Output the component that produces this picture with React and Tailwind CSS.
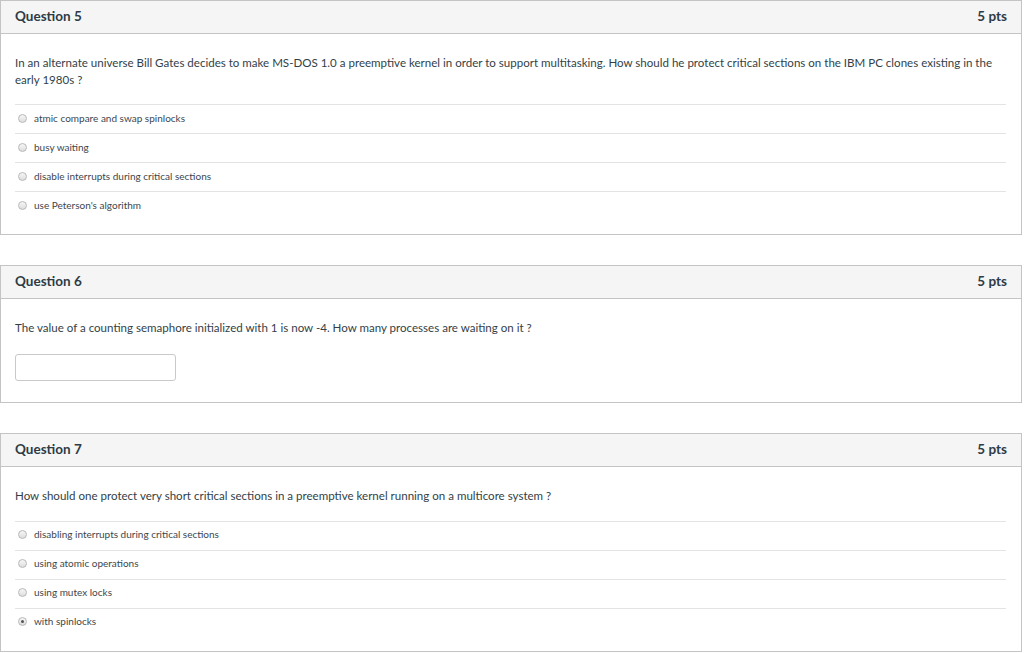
import React from 'react';

const FONT = { fontFamily: 'Lato, "Open Sans", sans-serif' };

const questions = [
  {
    id: 5,
    text: 'In an alternate universe Bill Gates decides to make MS-DOS 1.0 a preemptive kernel in order to support  multitasking. How should he protect critical sections on the IBM PC clones existing in the early 1980s ?',
    answers: [
      'atmic compare and swap spinlocks',
      'busy waiting',
      'disable interrupts during critical sections',
      "use Peterson's algorithm",
    ],
  },
  {
    id: 6,
    text: 'The value of a counting semaphore initialized with 1 is now -4. How many processes are waiting on it ?',
    input: true,
  },
  {
    id: 7,
    text: 'How should one protect very short critical sections in a preemptive kernel running on a multicore system ?',
    answers: [
      'disabling interrupts during critical sections',
      'using atomic operations',
      'using mutex locks',
      'with spinlocks',
    ],
    selected: 3,
    roomy: true,
  },
];

const Radio = ({ checked }) => (
  <span className="w-[9px] h-[9px] rounded-full border border-[#b8b8b8] bg-gradient-to-b from-[#f6f6f6] to-[#dedede] flex items-center justify-center shrink-0">
    {checked && <span className="w-[3px] h-[3px] rounded-full bg-[#555]" />}
  </span>
);

function QuestionCard({ q }) {
  return (
    <div className="w-[1022px] border border-[#c4c4c4] bg-white">
      <div className="h-[33px] bg-[#f5f5f5] border-b border-[#c4c4c4] flex items-center justify-between px-[14px] pb-[2px] text-[#2d3b45] text-[13.5px] font-bold">
        <span>Question {q.id}</span>
        <span>5 pts</span>
      </div>
      <div className={`px-[14px] pt-[20px] ${q.input ? 'pb-[21px]' : 'pb-[14px]'}`}>
        <p className="text-[11.55px] leading-[17px] text-[#333f48]">{q.text}</p>
        {q.input && (
          <div className="mt-[18px] w-[161px] h-[27px] border border-[#c9c9c9] rounded-[3px] bg-white" />
        )}
        {q.answers && (
          <div className={`${q.roomy ? 'mt-[17px]' : 'mt-[16px]'} mr-px`}>
            {q.answers.map((a, i) => (
              <div key={a} className={`h-[29px] border-t border-[#e3e3e3] flex items-center gap-[7px] pl-[3px] ${q.roomy ? 'pb-[3px]' : 'pb-px'}`}>
                <Radio checked={q.selected === i} />
                <span className="text-[10px] text-[#3d464d]">{a}</span>
              </div>
            ))}
          </div>
        )}
      </div>
    </div>
  );
}

export default function App() {
  return (
    <div className="w-[1024px] h-[653px] bg-white flex flex-col gap-[30px] overflow-hidden" style={FONT}>
      {questions.map((q) => (
        <QuestionCard key={q.id} q={q} />
      ))}
    </div>
  );
}
